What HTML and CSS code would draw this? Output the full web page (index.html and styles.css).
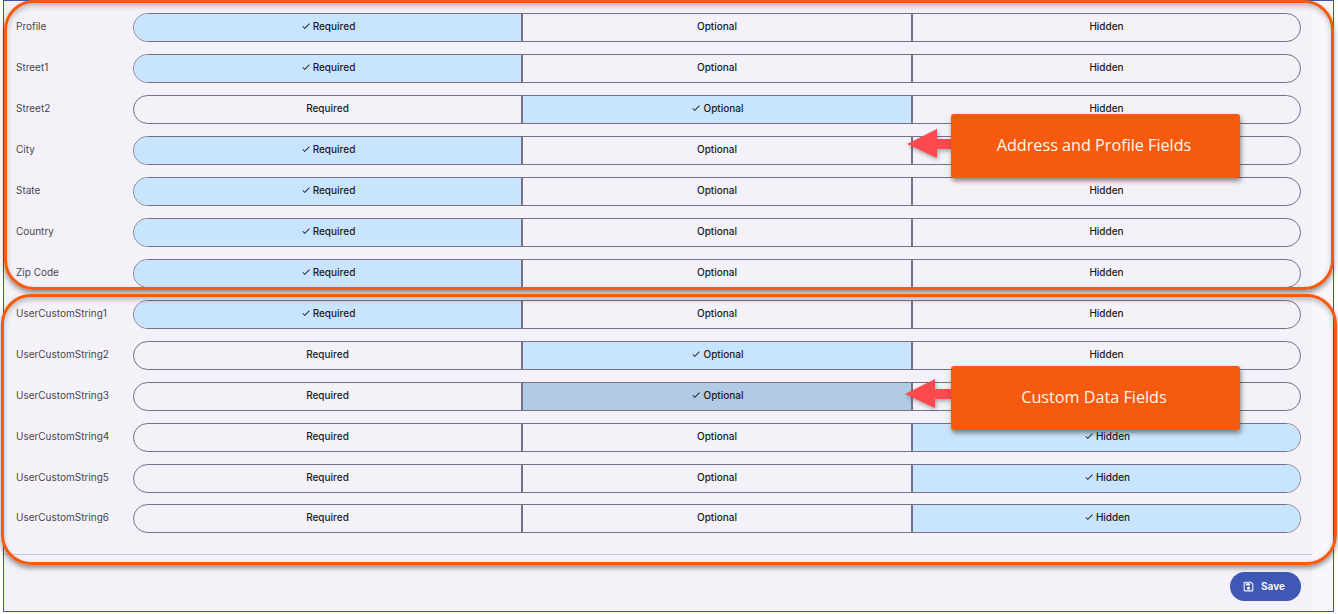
FILE: index.html
```html
<!DOCTYPE html>
<html lang="en">
<head>
<meta charset="utf-8">
<title>Fields</title>
<link rel="stylesheet" href="styles.css">
</head>
<body>
<svg class="defs" width="0" height="0" aria-hidden="true"><defs>
<symbol id="chk" viewBox="0 0 24 24"><path d="M9 16.2 4.800 12l-1.400 1.400L9 19 21 7l-1.400-1.400z"/></symbol>
</defs></svg>
<main class="panel">
  <section class="content">
    <div class="rows">
      <div class="row"><span class="label">Profile</span><div class="seg"><span class="opt on"><svg class="chk"><use href="#chk"/></svg>Required</span><span class="opt">Optional</span><span class="opt">Hidden</span></div></div>
      <div class="row"><span class="label">Street1</span><div class="seg"><span class="opt on"><svg class="chk"><use href="#chk"/></svg>Required</span><span class="opt">Optional</span><span class="opt">Hidden</span></div></div>
      <div class="row"><span class="label">Street2</span><div class="seg"><span class="opt">Required</span><span class="opt on"><svg class="chk"><use href="#chk"/></svg>Optional</span><span class="opt">Hidden</span></div></div>
      <div class="row"><span class="label">City</span><div class="seg"><span class="opt on"><svg class="chk"><use href="#chk"/></svg>Required</span><span class="opt">Optional</span><span class="opt">Hidden</span></div></div>
      <div class="row"><span class="label">State</span><div class="seg"><span class="opt on"><svg class="chk"><use href="#chk"/></svg>Required</span><span class="opt">Optional</span><span class="opt">Hidden</span></div></div>
      <div class="row"><span class="label">Country</span><div class="seg"><span class="opt on"><svg class="chk"><use href="#chk"/></svg>Required</span><span class="opt">Optional</span><span class="opt">Hidden</span></div></div>
      <div class="row"><span class="label">Zip Code</span><div class="seg"><span class="opt on"><svg class="chk"><use href="#chk"/></svg>Required</span><span class="opt">Optional</span><span class="opt">Hidden</span></div></div>
      <div class="row"><span class="label">UserCustomString1</span><div class="seg"><span class="opt on"><svg class="chk"><use href="#chk"/></svg>Required</span><span class="opt">Optional</span><span class="opt">Hidden</span></div></div>
      <div class="row"><span class="label">UserCustomString2</span><div class="seg"><span class="opt">Required</span><span class="opt on"><svg class="chk"><use href="#chk"/></svg>Optional</span><span class="opt">Hidden</span></div></div>
      <div class="row"><span class="label">UserCustomString3</span><div class="seg"><span class="opt">Required</span><span class="opt on hover"><svg class="chk"><use href="#chk"/></svg>Optional</span><span class="opt">Hidden</span></div></div>
      <div class="row"><span class="label">UserCustomString4</span><div class="seg"><span class="opt">Required</span><span class="opt">Optional</span><span class="opt on"><svg class="chk"><use href="#chk"/></svg>Hidden</span></div></div>
      <div class="row"><span class="label">UserCustomString5</span><div class="seg"><span class="opt">Required</span><span class="opt">Optional</span><span class="opt on"><svg class="chk"><use href="#chk"/></svg>Hidden</span></div></div>
      <div class="row"><span class="label">UserCustomString6</span><div class="seg"><span class="opt">Required</span><span class="opt">Optional</span><span class="opt on"><svg class="chk"><use href="#chk"/></svg>Hidden</span></div></div>
    </div>
    <hr class="divider">
    <div class="actions">
      <button class="save" type="button">
        <svg class="save-icon" viewBox="0 0 24 24"><path d="M17 3H5a2 2 0 0 0-2 2v14a2 2 0 0 0 2 2h14a2 2 0 0 0 2-2V7l-4-4zm2 16H5V5h11.200L19 7.800V19z"/><path d="M7 6h8v4H7z"/><circle cx="12" cy="15" r="2.800"/></svg>
        Save
      </button>
    </div>
  </section>
</main>

<div class="frame frame-a"></div>
<div class="frame frame-b"></div>

<svg class="arrow arrow-a" viewBox="0 0 44 30"><path d="M0 15 30 0v10h14v10H30v9z"/></svg>
<div class="callout callout-a">Address and Profile Fields</div>
<svg class="arrow arrow-b" viewBox="0 0 46 30"><path d="M0 15 30 0v10h16v10H30v9z"/></svg>
<div class="callout callout-b">Custom Data Fields</div>
</body>
</html>
```

FILE: styles.css
```css
* { box-sizing: border-box; }
html, body { margin: 0; height: 100%; background: #fff; overflow: hidden; }
body { position: relative; font-family: Inter, Roboto, "Liberation Sans", sans-serif; }
.defs { position: absolute; }

.panel {
  margin-left: 3px;
  width: 1331px;
  height: 612px;
  border: 1px solid #3f51b5;
  background: #f9f7fd;
}
.content {
  width: 1308px;
  height: 610px;
  background: #f4f2f8;
  padding: 12px 11px 0 12px;
}
.rows { display: flex; flex-direction: column; gap: 12px; }
.row { display: flex; align-items: center; height: 29px; }
.row:last-child { margin-top: -1px; }
.label {
  width: 117px;
  margin-top: -3px;
  font-size: 10px;
  color: #49454f;
}
.seg {
  display: grid;
  grid-template-columns: 387px 390px 389px;
  width: 1168px;
  height: 29px;
  border: 1px solid #747189;
  border-radius: 15px;
  overflow: hidden;
}
.opt {
  display: flex;
  align-items: center;
  justify-content: center;
  padding-bottom: 3px;
  font-size: 10px;
  font-weight: 500;
  color: #1a1c22;
  border-left: 2px solid #747189;
}
.opt:first-child { border-left: 0; }
.on { background: #c9e5fd; padding-left: 1px; }
.hover { background: #b0cbe3; }
.chk { width: 10px; height: 10px; margin-right: 2px; fill: #1a1c22; }

.divider {
  margin: 21px -11px 0 -12px;
  border: 0;
  border-top: 1px solid #c6c6dc;
}
.actions { display: flex; justify-content: flex-end; margin-top: 17px; }
.save {
  display: flex;
  align-items: center;
  gap: 6px;
  height: 29px;
  width: 71px;
  padding: 0 0 1px 12px;
  border: 0;
  border-radius: 15px;
  background: #3f58b5;
  color: #f4f4fb;
  font: 700 10px Inter, Roboto, "Liberation Sans", sans-serif;
}
.save-icon { width: 13px; height: 13px; fill: #f4f4fb; }

.frame {
  position: absolute;
  border: 3px solid #f85a0c;
  border-radius: 30px;
  box-shadow: 0 3px 5px rgba(60, 60, 60, .55), inset 0 3px 5px rgba(60, 60, 60, .3);
  pointer-events: none;
}
.frame-a { left: 4px; top: 0; width: 1330px; height: 290px; }
.frame-b { left: 1px; top: 294px; width: 1336px; height: 271px; }

.callout {
  position: absolute;
  left: 951px;
  width: 289px;
  height: 64px;
  padding-right: 3px;
  border-radius: 3px;
  background: #f55a0f;
  box-shadow: 1px 3px 5px rgba(40, 40, 40, .55);
  color: #fff6ee;
  font: 400 16.200px/62px "Open Sans", sans-serif;
  text-align: center;
}
.callout-a { top: 114px; }
.callout-b { top: 366px; }

.arrow {
  position: absolute;
  height: 30px;
  fill: #fe4a4f;
  filter: drop-shadow(1px 2px 2px rgba(60, 60, 60, .45));
}
.arrow-a { left: 907px; top: 129px; width: 44px; }
.arrow-b { left: 905px; top: 379px; width: 46px; }
```
